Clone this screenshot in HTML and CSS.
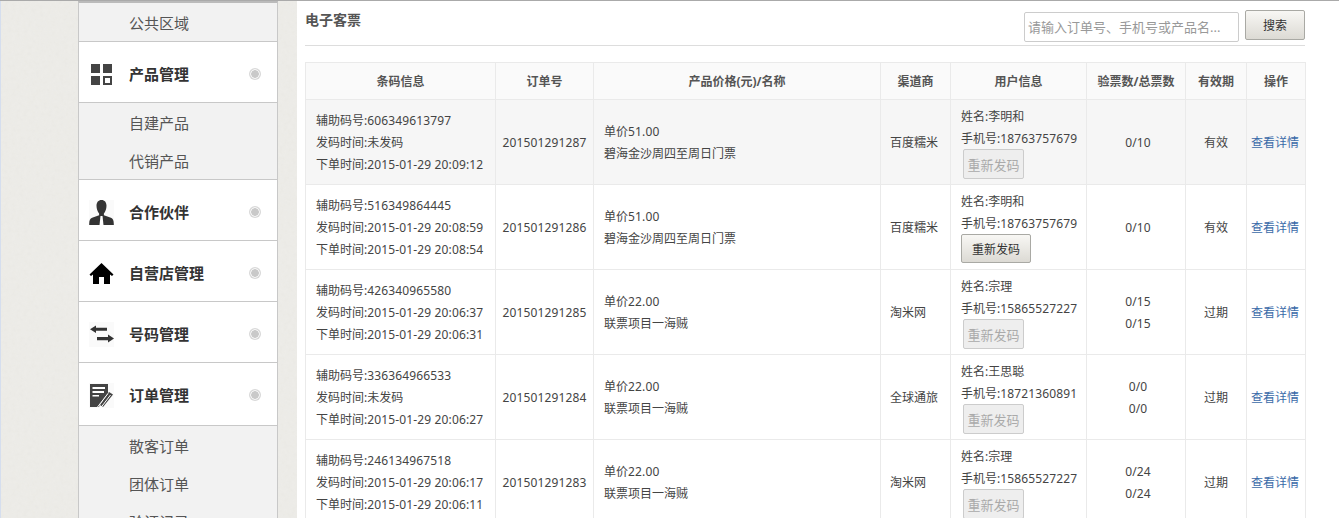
FILE: index.html
```html
<!DOCTYPE html>
<html lang="zh">
<head>
<meta charset="utf-8">
<title>电子客票</title>
<link rel="stylesheet" href="styles.css">
</head>
<body>
<div class="page">
  <aside class="sidebar">
    <a class="sub first">公共区域</a>
    <div class="nav">
      <svg class="ico" viewBox="0 0 25 25"><path fill="#444" d="M2 2h9v9H2zM14 2h9v9H14zM2 14h9v9H2z"/><path fill="#444" fill-rule="evenodd" d="M14 14h9v9H14zM16 16v5h5v-5z"/></svg>
      <b>产品管理</b><i class="dot"></i>
    </div>
    <div class="subs">
      <a class="sub">自建产品</a>
      <a class="sub">代销产品</a>
    </div>
    <div class="nav">
      <svg class="ico tint" viewBox="0 0 25 25"><path fill="#333" d="M12.500 0c3.200 0 5 2.400 5 5.800 0 3-1.100 5.800-2.600 7.800v1.600l7 2.600c2 .8 2.900 2.600 2.900 6.200V25H.2v-1c0-3.600.9-5.400 2.900-6.200l7-2.600v-1.600C8.600 11.600 7.500 8.800 7.500 5.800 7.500 2.400 9.300 0 12.500 0z"/><path fill="#fff" d="M11.500 16h2l1 9h-4z"/></svg>
      <b>合作伙伴</b><i class="dot"></i>
    </div>
    <div class="nav">
      <svg class="ico" viewBox="0 0 25 25"><path fill="#000" d="M12.500 2 .5 13.500l1.500 1.500 2-1.500V23h6v-7h5v7h6v-9.500l2 1.500 1.500-1.500z"/></svg>
      <b>自营店管理</b><i class="dot"></i>
    </div>
    <div class="nav">
      <svg class="ico tint" viewBox="0 0 25 25"><path fill="#333" d="M7 3.500v2.200h11v3H7v2.200L1 7.200zM19 12.500l6 4-6 4v-2.300H8v-3.200h11z"/></svg>
      <b>号码管理</b><i class="dot"></i>
    </div>
    <div class="nav tall">
      <svg class="ico tint" viewBox="0 0 25 25"><path fill="#444" d="M1 1h18v9L11 21l-1 3H1z"/><path fill="#fff" d="M3.500 4H16v2H3.500zM3.500 8H15v2H3.500zM3.500 12H10v1.500H3.500z"/><path fill="#444" d="M20 9l4 2.500L14 24l-3-2z"/><path stroke="#fff" stroke-width="1" fill="none" d="M19 10.500 8.500 24M21.500 12 12 24.500"/></svg>
      <b>订单管理</b><i class="dot"></i>
    </div>
    <div class="subs">
      <a class="sub">散客订单</a>
      <a class="sub">团体订单</a>
      <a class="sub">验证记录</a>
    </div>
  </aside>
  <main class="content">
    <header class="head">
      <h1>电子客票</h1>
      <form class="search">
        <input class="field" type="text" placeholder="请输入订单号、手机号或产品名...">
        <button class="btn search-btn" type="button">搜索</button>
      </form>
    </header>
    <table class="grid">
      <colgroup>
        <col class="c1"><col class="c2"><col class="c3"><col class="c4"><col class="c5"><col class="c6"><col class="c7"><col class="c8">
      </colgroup>
      <thead>
        <tr><th>条码信息</th><th>订单号</th><th>产品价格(元)/名称</th><th>渠道商</th><th>用户信息</th><th>验票数/总票数</th><th>有效期</th><th>操作</th></tr>
      </thead>
      <tbody>
        <tr class="odd">
          <td>辅助码号:<span class="n">606349613797</span><br>发码时间:未发码<br>下单时间:<span class="n">2015-01-29 20:09:12</span></td>
          <td class="ctr n">201501291287</td>
          <td>单价<span class="n">51.00</span><br>碧海金沙周四至周日门票</td>
          <td>百度糯米</td>
          <td>姓名:李明和<br>手机号:<span class="n">18763757679</span><br><button class="btn re off" type="button">重新发码</button></td>
          <td class="ctr n">0/10</td>
          <td class="ctr">有效</td>
          <td class="ctr"><a class="link">查看详情</a></td>
        </tr>
        <tr>
          <td>辅助码号:<span class="n">516349864445</span><br>发码时间:<span class="n">2015-01-29 20:08:59</span><br>下单时间:<span class="n">2015-01-29 20:08:54</span></td>
          <td class="ctr n">201501291286</td>
          <td>单价<span class="n">51.00</span><br>碧海金沙周四至周日门票</td>
          <td>百度糯米</td>
          <td>姓名:李明和<br>手机号:<span class="n">18763757679</span><br><button class="btn re" type="button">重新发码</button></td>
          <td class="ctr n">0/10</td>
          <td class="ctr">有效</td>
          <td class="ctr"><a class="link">查看详情</a></td>
        </tr>
        <tr>
          <td>辅助码号:<span class="n">426340965580</span><br>发码时间:<span class="n">2015-01-29 20:06:37</span><br>下单时间:<span class="n">2015-01-29 20:06:31</span></td>
          <td class="ctr n">201501291285</td>
          <td>单价<span class="n">22.00</span><br>联票项目一海贼</td>
          <td>淘米网</td>
          <td>姓名:宗理<br>手机号:<span class="n">15865527227</span><br><button class="btn re off" type="button">重新发码</button></td>
          <td class="ctr n">0/15<br>0/15</td>
          <td class="ctr">过期</td>
          <td class="ctr"><a class="link">查看详情</a></td>
        </tr>
        <tr>
          <td>辅助码号:<span class="n">336364966533</span><br>发码时间:未发码<br>下单时间:<span class="n">2015-01-29 20:06:27</span></td>
          <td class="ctr n">201501291284</td>
          <td>单价<span class="n">22.00</span><br>联票项目一海贼</td>
          <td>全球通旅</td>
          <td>姓名:王思聪<br>手机号:<span class="n">18721360891</span><br><button class="btn re off" type="button">重新发码</button></td>
          <td class="ctr n">0/0<br>0/0</td>
          <td class="ctr">过期</td>
          <td class="ctr"><a class="link">查看详情</a></td>
        </tr>
        <tr>
          <td>辅助码号:<span class="n">246134967518</span><br>发码时间:<span class="n">2015-01-29 20:06:17</span><br>下单时间:<span class="n">2015-01-29 20:06:11</span></td>
          <td class="ctr n">201501291283</td>
          <td>单价<span class="n">22.00</span><br>联票项目一海贼</td>
          <td>淘米网</td>
          <td>姓名:宗理<br>手机号:<span class="n">15865527227</span><br><button class="btn re off" type="button">重新发码</button></td>
          <td class="ctr n">0/24<br>0/24</td>
          <td class="ctr">过期</td>
          <td class="ctr"><a class="link">查看详情</a></td>
        </tr>
      </tbody>
    </table>
  </main>
</div>
</body>
</html>
```
FILE: styles.css
```css
* { box-sizing: border-box; }
html, body { margin: 0; height: 518px; overflow: hidden; background: #fff; }
body { font: 12px/22px "Noto Sans", "Noto Sans CJK SC", sans-serif; color: #444; }
.page { display: flex; height: 518px; padding-left: 78px; border-top: 1px solid #aaa; overflow: hidden; box-shadow: inset 1px 0 0 #d5deee; background-color: #edece8; background-image: url("data:image/svg+xml,%3Csvg xmlns='http://www.w3.org/2000/svg' width='200' height='200'%3E%3Cfilter id='t'%3E%3CfeTurbulence type='fractalNoise' baseFrequency='.25' numOctaves='3'/%3E%3CfeColorMatrix values='0 0 0 0 .6 0 0 0 0 .6 0 0 0 0 .55 0 0 0 .14 -.04'/%3E%3C/filter%3E%3Crect width='200' height='200' filter='url(%23t)'/%3E%3C/svg%3E"); }
.sidebar { width: 200px; flex: none; border-left: 1px solid #c8c8c8; border-right: 1px solid #c8c8c8; border-top: 2px solid #bbb; background: #f2f2f2; align-self: flex-start; }
.sub { display: block; height: 38px; padding-top: 1px; line-height: 38px; padding-left: 50px; font-size: 15px; color: #555; }
.sub.first { height: 39px; padding-top: 1px; border-bottom: 1px solid #c8c8c8; }
.nav { display: flex; align-items: center; height: 61px; padding: 4px 16px 0 10px; background: #fff; border-bottom: 1px solid #c8c8c8; font-size: 15px; color: #333; }
.nav.tall { height: 63px; padding-top: 3px; padding-bottom: 1px; }
.subs + .nav { border-top: 1px solid #c8c8c8; height: 62px; }
.nav b { flex: 1; margin-left: 15px; font-weight: 700; }
.ico { width: 25px; height: 25px; flex: none; }
.tint { background: #fafafa; }
.dot { width: 12px; height: 12px; border-radius: 50%; flex: none; background: radial-gradient(circle, #c9c9c9 0 3.500px, #f4f4f4 4px 4.500px, #d8d8d8 5px 6px); }
.content { width: 1042px; flex: none; margin-left: 19px; background: #fff; padding: 0 34px 0 8px; }
.head { display: flex; justify-content: space-between; align-items: flex-start; height: 45px; border-bottom: 1px solid #ddd; margin-bottom: 16px; }
.head h1 { margin: 8px 0 0; font-size: 14px; font-weight: 700; line-height: 22px; color: #555; }
.search { display: flex; gap: 6px; margin-top: 9px; }
.field { width: 215px; height: 30px; margin-top: 2px; padding: 0 3px; border: 1px solid #ccc; border-radius: 2px; font: 13px "Noto Sans", "Noto Sans CJK SC", sans-serif; outline: none; }
.field::placeholder { color: #999; opacity: 1; }
.btn { font: 12px "Noto Sans", "Noto Sans CJK SC", sans-serif; color: #333; border: 1px solid #a9a9a4; border-radius: 2px; background: linear-gradient(#f8f7f4, #dcdad4); padding: 0; }
.search-btn { width: 60px; height: 30px; }
.grid { width: 1000px; border-collapse: collapse; table-layout: fixed; }
.c1 { width: 190px; } .c2 { width: 98px; } .c3 { width: 287px; } .c4 { width: 70px; } .c5 { width: 136px; } .c6 { width: 99px; } .c7 { width: 61px; } .c8 { width: 59px; }
.grid th, .grid td { border: 1px solid #eaeaea; }
.grid th { height: 37px; padding: 2px 0 0; background: #fafafa; font-weight: 700; color: #555; text-align: center; }
.grid td { height: 85px; padding: 10px 10px 8px; vertical-align: middle; }
.grid td:nth-child(2) { padding-left: 5px; padding-right: 5px; }
.grid td:nth-child(4) { padding-left: 9px; }
.grid td:nth-child(5) { vertical-align: top; padding: 6px 0 0 10px; white-space: nowrap; }
.grid td:nth-child(6) { padding-left: 12px; padding-right: 8px; }
.grid td:nth-child(8) { padding-left: 4px; padding-right: 6px; }
.n { letter-spacing: .14px; }
.odd td { background: #f6f6f6; }
.ctr { text-align: center; }
.link { color: #3a6aa8; }
.re { display: block; width: 70px; height: 29px; margin-top: -1px; }
.off { width: 61px; height: 30px; margin-left: 2px; font-size: 13px; background: #eee; color: #aaa; border-color: #ccc; }
```
